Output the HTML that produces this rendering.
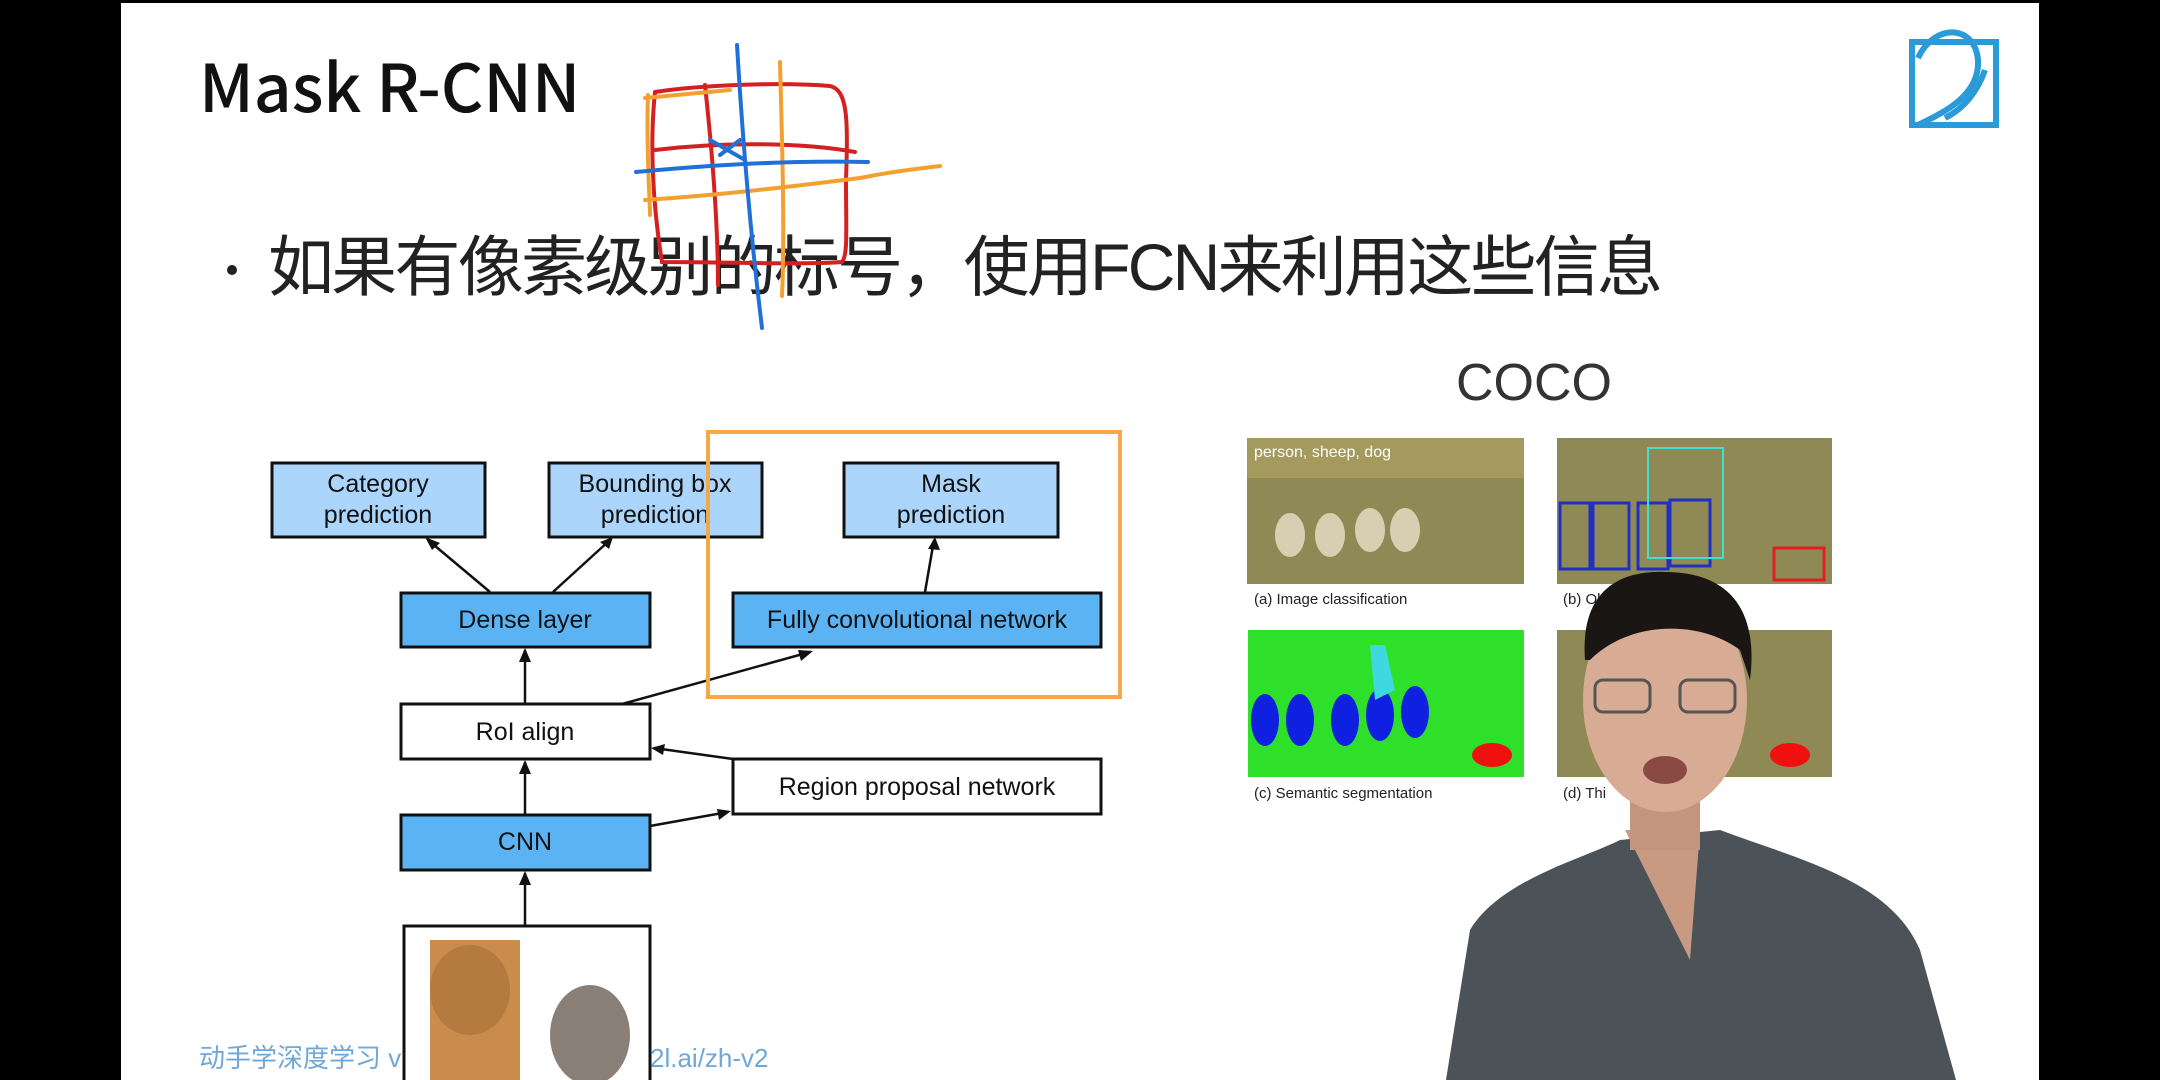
<!DOCTYPE html>
<html><head><meta charset="utf-8"><style>
html,body{margin:0;padding:0;background:#000;}
svg{display:block}
text{font-family:"Liberation Sans","Noto Sans CJK SC",sans-serif;}
</style></head><body>
<svg width="2160" height="1080" viewBox="0 0 2160 1080" xmlns="http://www.w3.org/2000/svg">
<rect x="0" y="0" width="2160" height="1080" fill="#000"/>
<rect x="121" y="3" width="1918" height="1077" fill="#fff"/>
<!-- title -->
<text x="199" y="112" font-size="66" font-weight="500" fill="#111" style="font-family:'Noto Sans CJK SC',sans-serif">Mask R-CNN</text>
<!-- bullet -->
<circle cx="232" cy="270" r="5" fill="#222"/>
<text x="268" y="290" font-size="66" fill="#222" textLength="1395">如果有像素级别的标号，使用FCN来利用这些信息</text>
<!-- COCO -->
<text x="1456" y="400" font-size="52" fill="#333">COCO</text>
<!-- logo -->
<g fill="none" stroke="#2a9ad8" stroke-width="6">
<rect x="1912" y="42" width="84" height="83"/>
<path d="M1918,58 C1935,22 1975,25 1978,60 C1980,95 1945,112 1918,125 M1945,118 C1965,108 1978,90 1985,70"/>
</g>
<!-- diagram boxes -->
<g stroke="#111" stroke-width="3">
<rect x="272" y="463" width="213" height="74" fill="#abd5fb"/>
<rect x="549" y="463" width="213" height="74" fill="#abd5fb"/>
<rect x="844" y="463" width="214" height="74" fill="#abd5fb"/>
<rect x="401" y="593" width="249" height="54" fill="#5cb3f4"/>
<rect x="733" y="593" width="368" height="54" fill="#5cb3f4"/>
<rect x="401" y="704" width="249" height="55" fill="#fff"/>
<rect x="733" y="759" width="368" height="55" fill="#fff"/>
<rect x="401" y="815" width="249" height="55" fill="#5cb3f4"/>
<rect x="404" y="926" width="246" height="160" fill="#fff"/>
</g>
<g font-size="25" fill="#111" text-anchor="middle">
<text x="378" y="492">Category</text><text x="378" y="523">prediction</text>
<text x="655" y="492">Bounding box</text><text x="655" y="523">prediction</text>
<text x="951" y="492">Mask</text><text x="951" y="523">prediction</text>
<text x="525" y="628">Dense layer</text>
<text x="917" y="628">Fully convolutional network</text>
<text x="525" y="740">RoI align</text>
<text x="917" y="795">Region proposal network</text>
<text x="525" y="850">CNN</text>
</g>
<!-- arrows -->
<g stroke="#111" stroke-width="2.5" fill="none">
<path d="M490,592 L428,540"/><path d="M553,592 L610,540"/>
<path d="M925,592 L934,540"/>
<path d="M525,704 L525,650"/>
<path d="M622,704 L810,652"/>
<path d="M733,759 L654,748"/>
<path d="M650,826 L728,812"/>
<path d="M525,815 L525,762"/>
<path d="M525,926 L525,873"/>
</g>
<g fill="#111">
<path d="M425,537 L440,543 L432,550Z"/><path d="M613,537 L600,542 L609,549Z"/>
<path d="M935,537 L928,549 L940,550Z"/><path d="M525,648 L519,662 L531,662Z"/>
<path d="M813,651 L798,650 L801,661Z"/><path d="M651,748 L665,744 L663,755Z"/>
<path d="M731,811 L717,809 L719,820Z"/><path d="M525,760 L519,774 L531,774Z"/>
<path d="M525,871 L519,885 L531,885Z"/>
</g>
<!-- dog/cat image -->
<rect x="430" y="940" width="90" height="140" fill="#c98c4c"/>
<ellipse cx="470" cy="990" rx="40" ry="45" fill="#b57a3e"/>
<ellipse cx="590" cy="1035" rx="40" ry="50" fill="#8a7f77"/>
<!-- orange annotation box -->
<rect x="708" y="432" width="412" height="265" fill="none" stroke="#f4a84a" stroke-width="4"/>
<!-- COCO images -->
<rect x="1247" y="438" width="277" height="146" fill="#8f8a55"/>
<rect x="1247" y="438" width="277" height="40" fill="#a49a5d"/>
<rect x="1557" y="438" width="275" height="146" fill="#8f8a55"/>
<rect x="1248" y="630" width="276" height="147" fill="#2fe02a"/>
<rect x="1557" y="630" width="275" height="147" fill="#8f8a55"/>
<text x="1254" y="457" font-size="16" fill="#fff">person, sheep, dog</text>
<g fill="#d8cfb3"><ellipse cx="1290" cy="535" rx="15" ry="22"/><ellipse cx="1330" cy="535" rx="15" ry="22"/><ellipse cx="1370" cy="530" rx="15" ry="22"/><ellipse cx="1405" cy="530" rx="15" ry="22"/></g>
<g fill="#1020e0"><ellipse cx="1265" cy="720" rx="14" ry="26"/><ellipse cx="1300" cy="720" rx="14" ry="26"/><ellipse cx="1345" cy="720" rx="14" ry="26"/><ellipse cx="1380" cy="715" rx="14" ry="26"/><ellipse cx="1415" cy="712" rx="14" ry="26"/></g>
<path d="M1370,645 L1385,645 L1395,690 L1375,700 Z" fill="#3fd8e0"/>
<ellipse cx="1492" cy="755" rx="20" ry="12" fill="#f01010"/>
<ellipse cx="1790" cy="755" rx="20" ry="12" fill="#f01010"/>
<rect x="1774" y="548" width="50" height="32" fill="none" stroke="#e02020" stroke-width="3"/>
<g fill="none" stroke="#2030c0" stroke-width="3"><rect x="1560" y="503" width="30" height="66"/><rect x="1593" y="503" width="36" height="66"/><rect x="1638" y="503" width="30" height="66"/><rect x="1670" y="500" width="40" height="66"/></g>
<rect x="1648" y="448" width="75" height="110" fill="none" stroke="#40e0d0" stroke-width="2"/>
<text x="1254" y="604" font-size="15" fill="#222">(a) Image classification</text>
<text x="1563" y="604" font-size="15" fill="#222">(b) Obj</text>
<text x="1254" y="798" font-size="15" fill="#222">(c) Semantic segmentation</text>
<text x="1563" y="798" font-size="15" fill="#222">(d) Thi</text>
<!-- person -->
<path d="M1446,1080 L1470,930 C1500,880 1580,860 1620,840 L1720,830 C1800,860 1890,880 1920,950 L1956,1080 Z" fill="#4b5258"/>
<path d="M1625,830 L1700,830 L1690,960 Z" fill="#c89a82"/>
<rect x="1630" y="760" width="70" height="90" fill="#c4957d"/>
<ellipse cx="1665" cy="700" rx="82" ry="112" fill="#d8ab94"/>
<path d="M1585,660 C1580,590 1620,570 1665,572 C1720,572 1760,600 1750,680 L1740,650 C1700,620 1630,620 1590,660 Z" fill="#1a1614"/>
<g fill="none" stroke="#555" stroke-width="3"><rect x="1595" y="680" width="55" height="32" rx="8"/><rect x="1680" y="680" width="55" height="32" rx="8"/></g>
<ellipse cx="1665" cy="770" rx="22" ry="14" fill="#8a4a44"/>
<!-- footer -->
<text x="199" y="1067" font-size="26" fill="#6fa8d8">动手学深度学习 v</text>
<text x="650" y="1067" font-size="26" fill="#6fa8d8">2l.ai/zh-v2</text>
<!-- hand-drawn annotations -->
<g fill="none" stroke-width="4" stroke-linecap="round">
<path d="M655,92 C700,85 780,82 830,86 C848,90 848,120 846,180 C846,230 848,255 842,262 C800,265 720,262 662,262 C652,200 650,140 655,92" stroke="#d42020"/>
<path d="M655,150 C720,142 800,142 855,152" stroke="#d42020"/>
<path d="M705,85 C712,150 718,220 718,285" stroke="#d42020"/>
<path d="M648,95 C646,150 650,200 650,215 M645,98 L730,90 M780,62 C782,140 785,230 782,296" stroke="#f4a030"/>
<path d="M645,200 C720,195 780,188 860,178 C900,170 925,168 940,166" stroke="#f4a030"/>
<path d="M737,45 C742,130 750,230 762,328" stroke="#2070d8"/>
<path d="M636,172 C700,166 790,160 868,162" stroke="#2070d8"/>
<path d="M710,140 L745,160 M720,155 L740,140" stroke="#2070d8"/>
</g>
</svg>
</body></html>
